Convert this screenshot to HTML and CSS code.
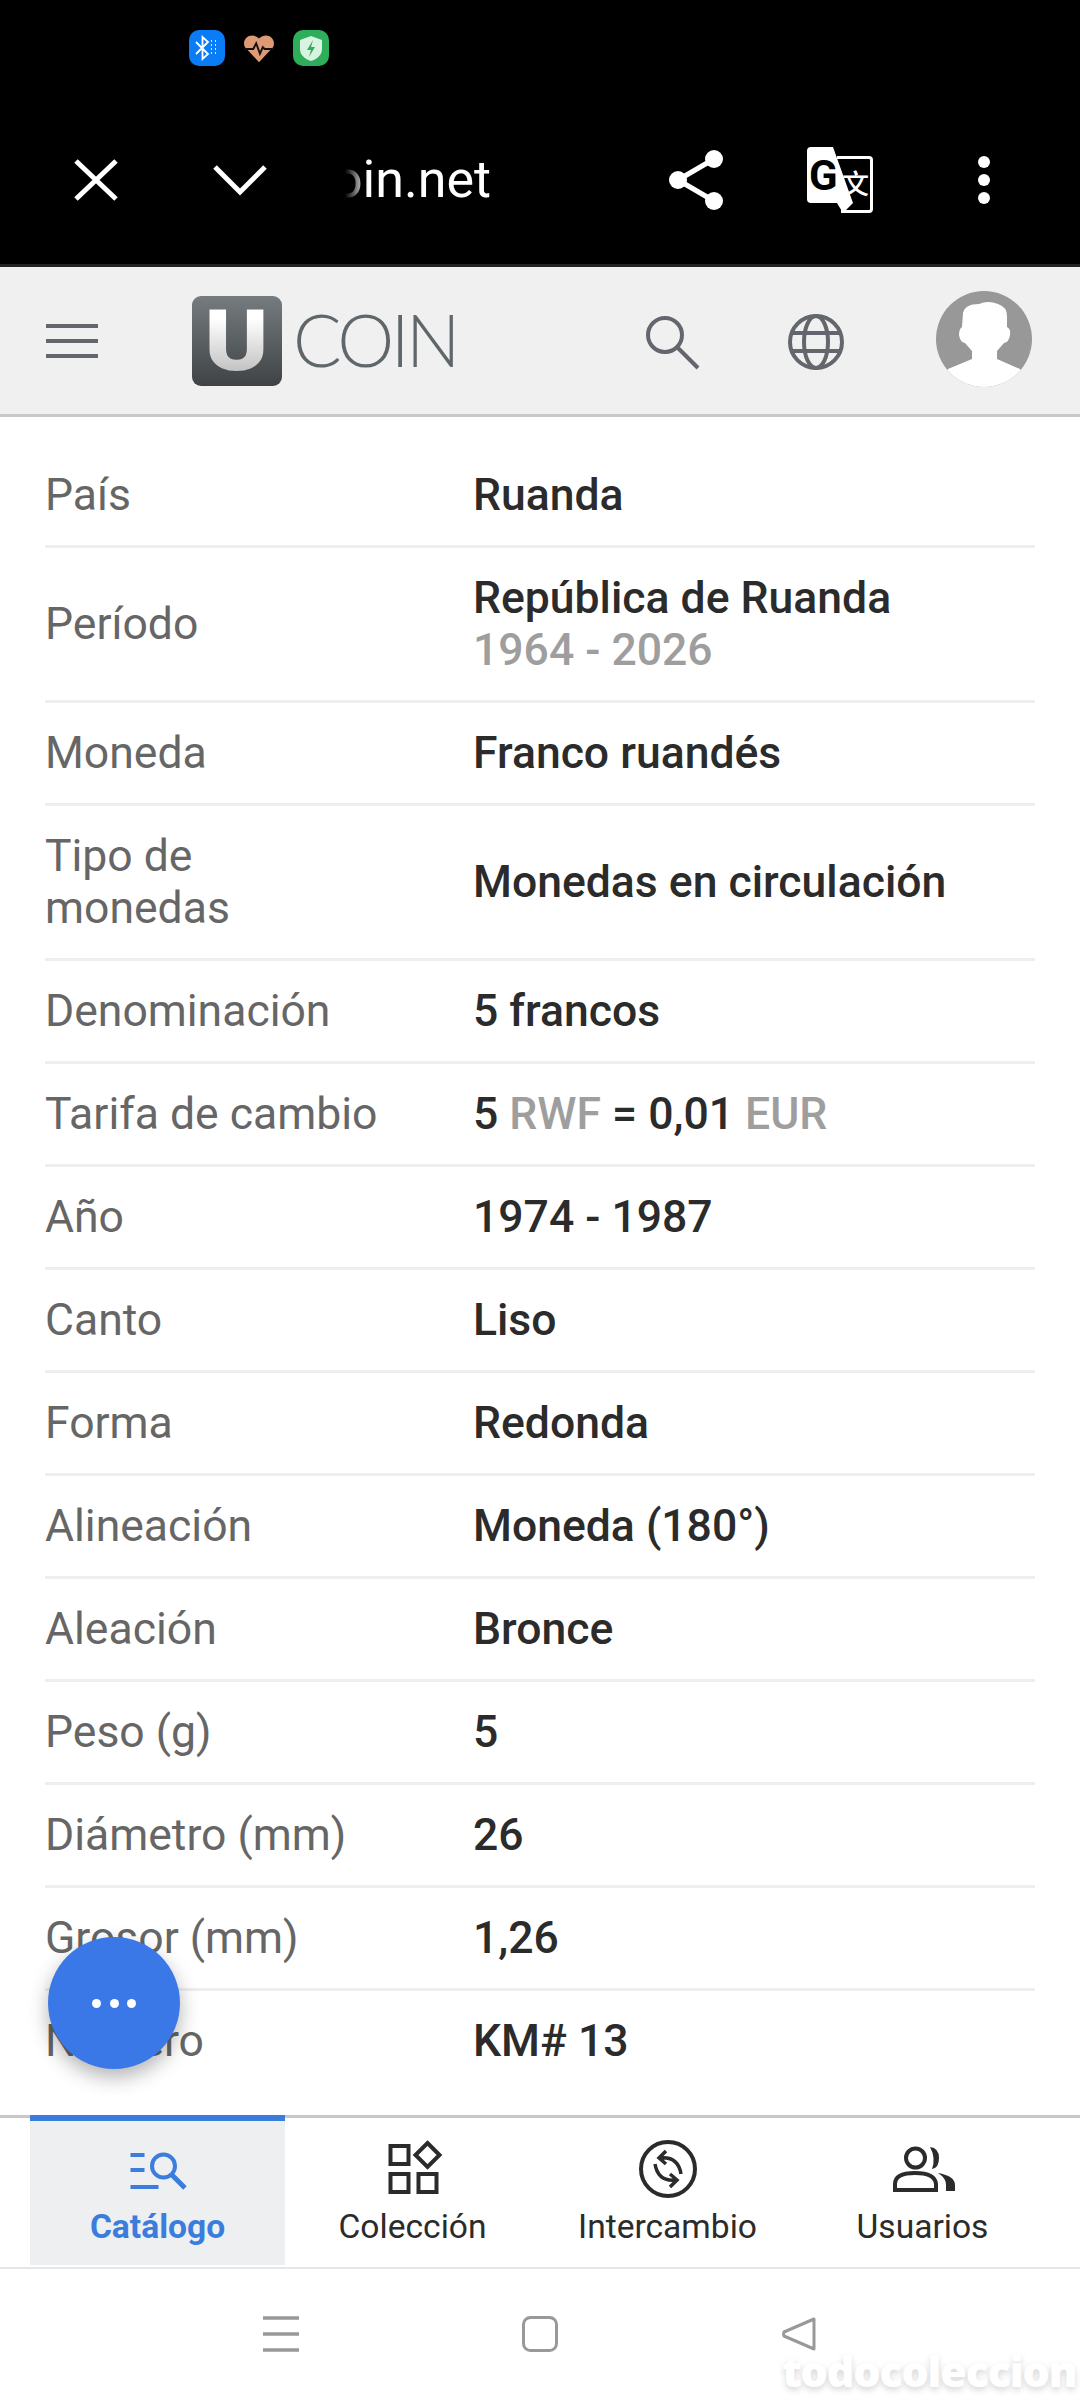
FILE: index.html
```html
<!doctype html>
<html lang="es">
<head>
<meta charset="utf-8">
<title>uCoin</title>
<link rel="stylesheet" href="styles.css">
</head>
<body>
<div class="phone-top">
	<div class="status">
		<svg class="status-ico" width="36" height="36" viewBox="0 0 36 36">
			<rect width="36" height="36" rx="10" fill="#0a7cf5"/>
			<path d="M7 12l12 12-5.500 5V7l5.500 5L7 24" fill="none" stroke="#fff" stroke-width="1.800"/>
			<path d="M22 11h1M26 11h1M22 15h1M26 15h1M22 19h1M26 19h1M22 23h1M26 23h1" stroke="#cfe4ff" stroke-width="2"/>
		</svg>
		<svg class="status-ico" width="34" height="36" viewBox="0 0 36 36">
			<path d="M18 33L3 17C-1 8 10 0 18 8c8-8 19 0 15 9z" fill="#dd9a74"/>
			<path d="M2 19h10l3-6 4 11 3-7 2 2h10" fill="none" stroke="#111" stroke-width="2"/>
		</svg>
		<svg class="status-ico" width="36" height="36" viewBox="0 0 36 36">
			<rect width="36" height="36" rx="10" fill="#2ead5b"/>
			<path d="M18 6l11 4v9c0 6-5 10-11 12-6-2-11-6-11-12v-9z" fill="#d8f3e0"/>
			<path d="M20 10l-6 10h4l-2 7 6-10h-4z" fill="#2ead5b"/>
		</svg>
	</div>
	<div class="browser-bar">
		<svg class="b-close" width="44" height="42" viewBox="0 0 44 42">
			<path d="M2 2l40 38M42 2L2 40" stroke="#fff" stroke-width="5"/>
		</svg>
		<svg class="b-chev" width="54" height="32" viewBox="0 0 54 32">
			<path d="M2 3l25 25L52 3" fill="none" stroke="#fff" stroke-width="5"/>
		</svg>
		<div class="b-url">ucoin.net</div>
		<svg class="b-share" width="54" height="60" viewBox="0 0 54 60">
			<path d="M9 30L45 9M9 30l36 21" stroke="#fff" stroke-width="5"/>
			<circle cx="9" cy="30" r="9" fill="#fff"/>
			<circle cx="45" cy="9" r="9" fill="#fff"/>
			<circle cx="45" cy="51" r="9" fill="#fff"/>
		</svg>
		<svg class="b-trans" width="66" height="66" viewBox="0 0 66 66">
			<path d="M4 0H26L46 56H4q-4 0-4-4V4q0-4 4-4z" fill="#fff"/>
			<path d="M30 10.500h32q2.500 0 2.500 2.500v49q0 2.500-2.500 2.500H34" fill="none" stroke="#fff" stroke-width="3"/>
			<path d="M30 56H46L36 66z" fill="#fff"/>
			<text class="tr-g" x="2" y="43">G</text>
			<text class="tr-wen" x="35" y="47">文</text>
		</svg>
		<svg class="b-more" width="12" height="48" viewBox="0 0 12 48">
			<circle cx="6" cy="6" r="6" fill="#fff"/>
			<circle cx="6" cy="24" r="6" fill="#fff"/>
			<circle cx="6" cy="42" r="6" fill="#fff"/>
		</svg>
	</div>
</div>

<header class="site-head">
	<svg class="h-menu" width="52" height="34" viewBox="0 0 52 34">
		<path d="M0 2h52M0 17h52M0 32h52" stroke="#63676d" stroke-width="4"/>
	</svg>
	<a class="logo">
		<span class="logo-box"><span class="logo-u">U</span></span>
		<span class="logo-text">COIN</span>
	</a>
	<svg class="h-search" width="56" height="56" viewBox="0 0 56 56">
		<circle cx="20" cy="20" r="17" fill="none" stroke="#63676d" stroke-width="4"/>
		<path d="M32 32l21 21" stroke="#63676d" stroke-width="4"/>
	</svg>
	<svg class="h-globe" width="58" height="58" viewBox="0 0 58 58">
		<g fill="none" stroke="#63676d" stroke-width="4">
			<circle cx="29" cy="29" r="26"/>
			<ellipse cx="29" cy="29" rx="12" ry="26"/>
			<path d="M5 20h48M5 38h48"/>
		</g>
	</svg>
	<svg class="h-avatar" width="96" height="96" viewBox="0 0 96 96">
		<defs><clipPath id="avclip"><circle cx="48" cy="48" r="48"/></clipPath></defs>
		<circle cx="48" cy="48" r="48" fill="#989898"/>
		<path clip-path="url(#avclip)" d="M27 22Q29 13 43 13Q52 9 62 13Q71 16 71 25L71 36Q75 38 74 44Q73 51 68 52L61 60L61 68L84 78L96 96L0 96L12 78L36 68L36 60L29 52Q24 51 23 44Q23 38 26 36z" fill="#fff"/>
	</svg>
</header>

<main class="content">
	<div class="row"><div class="lbl">País</div><div class="val">Ruanda</div></div>
	<div class="row"><div class="lbl">Período</div><div class="val">República de Ruanda<br><span class="mut">1964 - 2026</span></div></div>
	<div class="row"><div class="lbl">Moneda</div><div class="val">Franco ruandés</div></div>
	<div class="row"><div class="lbl">Tipo de<br>monedas</div><div class="val">Monedas en circulación</div></div>
	<div class="row"><div class="lbl">Denominación</div><div class="val">5 francos</div></div>
	<div class="row"><div class="lbl">Tarifa de cambio</div><div class="val">5 <span class="mut">RWF</span> = 0,01 <span class="mut">EUR</span></div></div>
	<div class="row"><div class="lbl">Año</div><div class="val">1974 - 1987</div></div>
	<div class="row"><div class="lbl">Canto</div><div class="val">Liso</div></div>
	<div class="row"><div class="lbl">Forma</div><div class="val">Redonda</div></div>
	<div class="row"><div class="lbl">Alineación</div><div class="val">Moneda (180°)</div></div>
	<div class="row"><div class="lbl">Aleación</div><div class="val">Bronce</div></div>
	<div class="row"><div class="lbl">Peso (g)</div><div class="val">5</div></div>
	<div class="row"><div class="lbl">Diámetro (mm)</div><div class="val">26</div></div>
	<div class="row"><div class="lbl">Grosor (mm)</div><div class="val">1,26</div></div>
	<div class="row last"><div class="lbl">Número</div><div class="val">KM# 13</div></div>
	<button class="fab"><span></span><span></span><span></span></button>
</main>

<nav class="tabs">
	<div class="tab active">
		<svg width="70" height="60" viewBox="0 0 70 60">
			<g fill="none" stroke="#3b7ddd" stroke-width="4">
				<path d="M7.500 17h14M7.500 32h14M7.500 49h28"/>
				<circle cx="40.500" cy="28" r="11.500"/>
				<path d="M49 37l13 13" stroke-width="5"/>
			</g>
		</svg>
		<div class="tab-label">Catálogo</div>
	</div>
	<div class="tab">
		<svg width="70" height="60" viewBox="0 0 70 60">
			<g fill="none" stroke="#2b2b2b" stroke-width="4">
				<rect x="12.500" y="8" width="18" height="18"/>
				<rect x="12.500" y="36" width="18" height="18"/>
				<rect x="40.500" y="36" width="18" height="18"/>
				<path d="M49.500 5l12 12-12 12-12-12z"/>
			</g>
		</svg>
		<div class="tab-label">Colección</div>
	</div>
	<div class="tab">
		<svg width="70" height="60" viewBox="0 0 70 60">
			<g fill="none" stroke="#2b2b2b" stroke-width="4">
				<circle cx="35" cy="31" r="27"/>
				<path d="M33 13l-7 7 7 6M27 20q18-2 21 16M37 49l7-7-7-6M43 42q-18 2-21-16" stroke-width="3.500"/>
			</g>
		</svg>
		<div class="tab-label">Intercambio</div>
	</div>
	<div class="tab">
		<svg width="70" height="60" viewBox="0 0 70 60">
			<g fill="none" stroke="#2b2b2b" stroke-width="4">
				<circle cx="27.500" cy="20" r="9.500"/>
				<path d="M7 52v-6q0-11 20-11t21 11v6z"/>
			</g>
			<path d="M42 9q9 1 9 11t-7 11q4-11-2-22z" fill="#2b2b2b"/>
			<path d="M50 35q17 3 17 12v6H58v-6q0-7-8-12z" fill="#2b2b2b"/>
		</svg>
		<div class="tab-label">Usuarios</div>
	</div>
</nav>

<div class="sys-nav">
	<svg width="36" height="36" viewBox="0 0 36 36">
		<path d="M0 2h36M0 18h36M0 34h36" stroke="#999" stroke-width="3.500"/>
	</svg>
	<svg width="36" height="36" viewBox="0 0 36 36">
		<rect x="1.500" y="1.500" width="33" height="33" rx="7" fill="none" stroke="#999" stroke-width="3"/>
	</svg>
	<svg width="36" height="36" viewBox="0 0 36 36">
		<path d="M33 3L3 16q-1 2 0 4l30 13z" fill="none" stroke="#999" stroke-width="3" stroke-linejoin="round"/>
	</svg>
	<div class="watermark">todocoleccion</div>
</div>
</body>
</html>
```

FILE: styles.css
```css
* {
	box-sizing: border-box;
}
html, body {
	margin: 0;
	padding: 0;
}
body {
	width: 1080px;
	height: 2400px;
	display: flex;
	flex-direction: column;
	background: #fff;
	font-family: Roboto, "Liberation Sans", sans-serif;
	overflow: hidden;
}
svg {
	display: block;
	flex: none;
}

/* phone status + browser bar */
.phone-top {
	height: 267px;
	background: #000;
	border-bottom: 3px solid #222;
	padding-top: 30px;
}
.status {
	display: flex;
	gap: 17px;
	padding-left: 189px;
}
.browser-bar {
	display: flex;
	align-items: center;
	height: 66px;
	margin-top: 81px;
}
.b-close {
	margin-left: 74px;
}
.b-chev {
	margin-left: 95px;
}
.b-url {
	width: 224px;
	overflow: hidden;
	text-align: right;
	color: #fff;
	font-size: 52px;
	line-height: 66px;
	-webkit-mask-image: linear-gradient(to right, transparent 0, transparent 78px, #000 101px);
	mask-image: linear-gradient(to right, transparent 0, transparent 78px, #000 101px);
}
.b-share {
	margin-left: 178px;
}
.b-trans {
	margin-left: 84px;
}
.b-more {
	margin-left: 105px;
}
.tr-g {
	font: 700 42px Roboto, sans-serif;
	fill: #000;
}
.tr-wen {
	font: 500 27px "Noto Sans CJK SC", sans-serif;
	fill: #fff;
}

/* site header */
.site-head {
	height: 150px;
	background: #f0f0f0;
	border-bottom: 3px solid #c8c8c8;
	display: flex;
	align-items: center;
	position: relative;
}
.h-menu {
	margin-left: 46px;
}
.logo {
	display: flex;
	align-items: center;
	margin-left: 94px;
}
.logo-box {
	width: 90px;
	height: 90px;
	border-radius: 9px;
	background: linear-gradient(#757b7e, #3f4346);
	display: flex;
	align-items: center;
	justify-content: center;
}
.logo-u {
	font-family: Roboto, sans-serif;
	font-weight: 900;
	font-size: 86px;
	line-height: 90px;
	background: linear-gradient(#fff 25%, #c6c6c6 80%);
	-webkit-background-clip: text;
	background-clip: text;
	color: transparent;
	transform: scaleX(1.120);
}
.logo-text {
	margin-left: 11px;
	margin-bottom: 4px;
	font-family: Lato, sans-serif;
	font-weight: 300;
	font-size: 72px;
	line-height: 90px;
	letter-spacing: -3.500px;
	color: #5f676a;
}
.h-search {
	position: absolute;
	left: 645px;
	top: 48px;
}
.h-globe {
	position: absolute;
	left: 787px;
	top: 46px;
}
.h-avatar {
	position: absolute;
	left: 936px;
	top: 24px;
}

/* spec rows */
.content {
	flex: 1;
	position: relative;
	padding: 28px 45px 0;
	font-size: 44.500px;
	line-height: 52px;
}
.row {
	display: flex;
	align-items: center;
	padding: 24px 0;
	border-bottom: 3px solid #eee;
}
.row.last {
	border-bottom: 0;
}
.lbl {
	width: 428px;
	flex: none;
	color: #666;
}
.val {
	color: #2b2b2b;
	font-weight: 500;
}
.mut {
	color: #9e9e9e;
}
.fab {
	position: absolute;
	left: 48px;
	top: 1520px;
	width: 132px;
	height: 132px;
	border: 0;
	border-radius: 50%;
	background: #3b78e7;
	box-shadow: 0 8px 20px rgba(0, 0, 0, .3);
	display: flex;
	align-items: center;
	justify-content: center;
	gap: 8.500px;
}
.fab span {
	width: 9px;
	height: 9px;
	border-radius: 50%;
	background: #fff;
}

/* bottom tabs */
.tabs {
	height: 154px;
	padding: 0 30px;
	display: flex;
	border-top: 3px solid #c8c8c8;
	border-bottom: 2px solid #e6e6e6;
}
.tab {
	width: 255px;
	height: 150px;
	display: flex;
	flex-direction: column;
	align-items: center;
	padding-top: 20px;
	color: #2b2b2b;
}
.tab.active {
	margin-top: -3px;
	padding-top: 23px;
	background: #eeeff0;
	border-top: 6px solid #3b7ddd;
	color: #3b7ddd;
	font-weight: 700;
}
.tab.active svg {
	margin-top: -6px;
}
.tab-label {
	margin-top: 9px;
	font-size: 33.600px;
	line-height: 40px;
}

/* android nav */
.sys-nav {
	height: 131px;
	position: relative;
	display: flex;
	justify-content: center;
	gap: 223px;
	padding-top: 47px;
}
.watermark {
	position: absolute;
	left: 782px;
	top: 80px;
	font-family: "Open Sans", sans-serif;
	font-weight: 800;
	font-size: 43px;
	line-height: 44px;
	letter-spacing: -1.200px;
	color: #fff;
	text-shadow: 0 3px 6px rgba(0, 0, 0, .16);
}
```
